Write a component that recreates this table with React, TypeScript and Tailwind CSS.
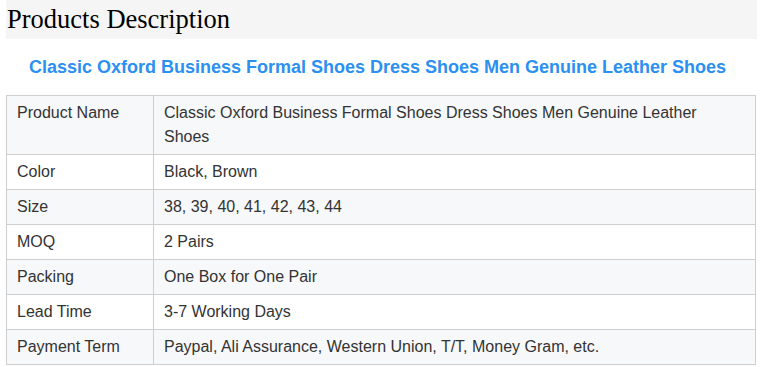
import React from "react"

const rows: [string, string][] = [
  ["Product Name", "Classic Oxford Business Formal Shoes Dress Shoes Men Genuine Leather Shoes"],
  ["Color", "Black, Brown"],
  ["Size", "38, 39, 40, 41, 42, 43, 44"],
  ["MOQ", "2 Pairs"],
  ["Packing", "One Box for One Pair"],
  ["Lead Time", "3-7 Working Days"],
  ["Payment Term", "Paypal, Ali Assurance, Western Union, T/T, Money Gram, etc."],
]

export default function App() {
  return (
    <div className="w-[763px] h-[367px] bg-white px-[6px] overflow-hidden">
      {/* Section header */}
      <div className="h-[39px] bg-[#f5f5f5] flex items-center pl-[1px]">
        <h2 className="text-[26.5px] leading-none text-black" style={{ fontFamily: "'Liberation Serif', serif" }}>
          Products Description
        </h2>
      </div>

      <h3
        className="mt-[17px] pr-[8px] text-center text-[18px] font-bold leading-[22px] text-[#2b90f0]"
        style={{ fontFamily: "'Liberation Sans', Arial, sans-serif" }}
      >
        Classic Oxford Business Formal Shoes Dress Shoes Men Genuine Leather Shoes
      </h3>

      <table
        className="mt-[17px] w-[750px] border-collapse text-[16px] leading-[24px] text-[#333]"
        style={{ fontFamily: "'Liberation Sans', Arial, sans-serif" }}
      >
        <tbody>
          {rows.map(([label, value], i) => (
            <tr key={label} className={i % 2 === 0 ? "bg-[#f7f8fa]" : "bg-white"}>
              <td className="w-[147px] border border-[#cfcfcf] px-[10px] py-[5px] align-top">{label}</td>
              <td className="border border-[#cfcfcf] px-[10px] py-[5px] align-top">{value}</td>
            </tr>
          ))}
        </tbody>
      </table>
    </div>
  )
}
